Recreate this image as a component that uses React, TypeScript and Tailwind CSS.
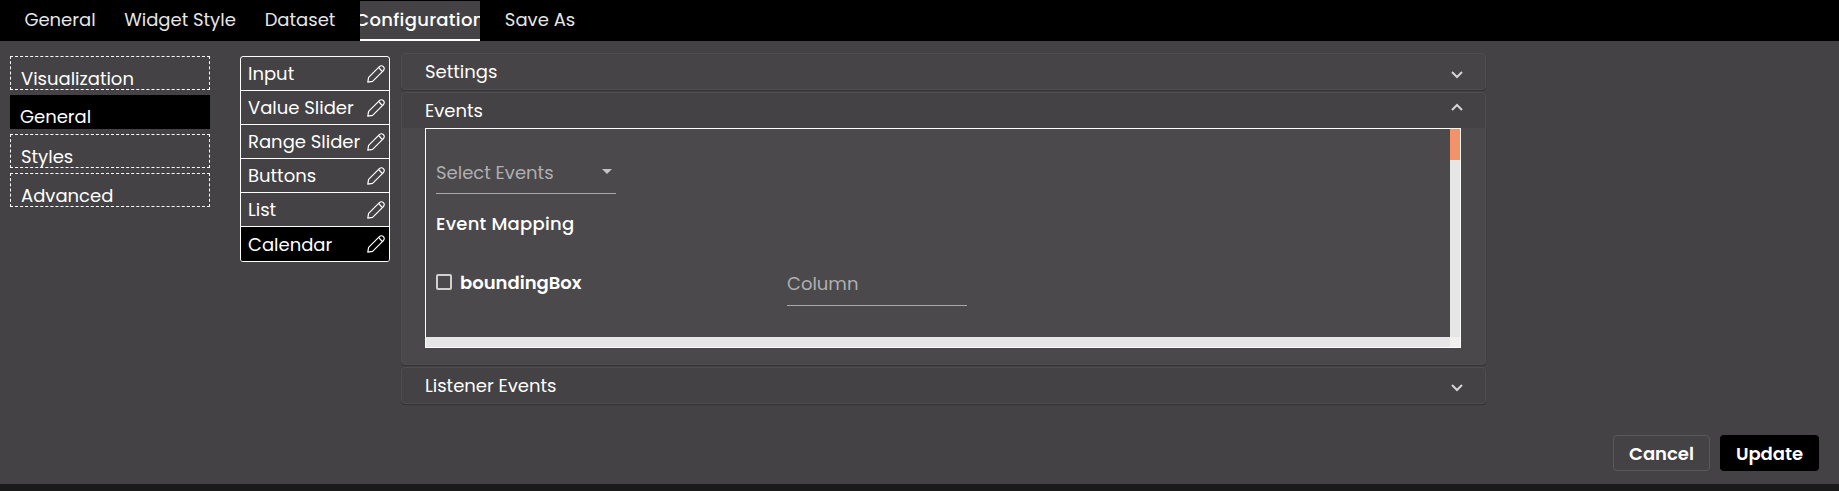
import React from "react";

function Pencil() {
  return (
    <svg width="18" height="18" viewBox="0 0 18 18" fill="none" stroke="#fff" strokeWidth="1.2" strokeLinejoin="round" strokeLinecap="round" className="shrink-0">
      <path d="M0.8 17.2 L1.6 12.4 L12.4 1.6 C13.5 0.5 15.3 0.5 16.4 1.6 C17.5 2.7 17.5 4.5 16.4 5.6 L5.6 16.4 Z" />
      <path d="M11.6 2.4 C12.6 3 13 4.6 15.6 6.4" />
    </svg>
  );
}

function Chevron({ up }: { up?: boolean }) {
  return (
    <svg width="12" height="8" viewBox="0 0 12 8" fill="none" stroke="#d4d4d4" strokeWidth="2" className="shrink-0">
      <path d={up ? "M1 7 L6 2 L11 7" : "M1 1 L6 6 L11 1"} />
    </svg>
  );
}

const tabs = [
  { label: "General", w: "w-[100px]" },
  { label: "Widget Style", w: "w-[140px]" },
  { label: "Dataset", w: "w-[100px]" },
];

const side = ["Visualization", "General", "Styles", "Advanced"];
const items = ["Input", "Value Slider", "Range Slider", "Buttons", "List", "Calendar"];

export default function App() {
  return (
    <div className="w-[1839px] h-[491px] overflow-hidden flex flex-col bg-[#444245] text-white font-['Poppins','Inter',sans-serif] text-[18px]">
      <div className="h-[41px] shrink-0 bg-black flex pl-[10px]">
        {tabs.map((t) => (
          <div key={t.label} className={`${t.w} h-[41px] pb-[2px] flex items-center justify-center text-[#e6e6e6]`}>
            {t.label}
          </div>
        ))}
        <div className="ml-[10px] w-[120px] mt-[1px] h-[40px] bg-[#444245] border-b-2 border-white overflow-hidden flex items-center justify-center whitespace-nowrap font-medium tracking-[0.3px] pb-[1px]">
          Configuration
        </div>
        <div className="ml-[10px] w-[100px] h-[41px] pb-[2px] flex items-center justify-center text-[#e6e6e6]">Save As</div>
      </div>

      <div className="flex-1 flex pl-[10px]">
        <div className="w-[200px] mt-[15px] flex flex-col gap-[5px]">
          {side.map((s) => (
            <div
              key={s}
              className={
                s === "General"
                  ? "h-[34px] bg-black pl-[10px] pt-[10px] leading-6"
                  : "h-[34px] border border-dashed border-white pl-[10px] pt-[10px] leading-6"
              }
            >
              {s}
            </div>
          ))}
        </div>

        <div className="w-[150px] ml-[30px] mt-[15px] h-[206px] border border-white rounded-[3px] overflow-hidden flex flex-col">
          {items.map((it, i) => (
            <div
              key={it}
              className={`h-[34px] flex items-center justify-between pl-[7px] pr-[4px] ${i < items.length - 1 ? "border-b border-white" : ""} ${it === "Calendar" ? "bg-black" : ""}`}
            >
              <span className="whitespace-nowrap">{it}</span>
              <Pencil />
            </div>
          ))}
        </div>

        <div className="w-[1085px] ml-[11px] mt-[12px] flex flex-col gap-[2px]">
          <div className="h-[37px] rounded-[4px] border border-[#4f4d50] bg-[#464447] shadow-[0_1px_1px_rgba(0,0,0,0.25)] pl-[23px] pr-[22px] flex items-center justify-between">
            <span>Settings</span>
            <span className="mt-[6px]"><Chevron /></span>
          </div>

          <div className="h-[273px] rounded-[4px] border border-[#4f4d50] bg-[#4a484b] shadow-[0_1px_1px_rgba(0,0,0,0.25)] flex flex-col">
            <div className="h-[35px] shrink-0 bg-[#444245] rounded-t-[4px] pl-[23px] pr-[22px] flex items-center justify-between">
              <span>Events</span>
              <span className="-mt-[7px]"><Chevron up /></span>
            </div>
            <div className="ml-[23px] w-[1036px] h-[220px] border border-white bg-[#4b494c] flex flex-col">
              <div className="flex-1 flex min-h-0">
                <div className="flex-1 pl-[10px] flex flex-col">
                  <div className="mt-[22px] w-[180px] h-[43px] border-b border-[#a9a8aa] flex items-center justify-between pr-[4px] text-[#b0afb1]">
                    <span>Select Events</span>
                    <span className="w-0 h-0 border-x-[5px] border-x-transparent border-t-[5px] border-t-[#c4c4c4] mb-[2px]" />
                  </div>
                  <div className="mt-[18px] leading-6 font-medium tracking-[0.25px]">Event Mapping</div>
                  <div className="mt-[35px] flex">
                    <div className="w-[351px] flex items-center gap-[8px] h-[24px] -mt-[1px]">
                      <span className="w-[16px] h-[16px] border-2 border-[#d0d0d0] rounded-[2px]" />
                      <span className="font-semibold">boundingBox</span>
                    </div>
                    <div className="w-[180px] h-[35px] border-b border-[#a9a8aa] text-[#b0afb1] leading-6 pt-[1px]">Column</div>
                  </div>
                </div>
                <div className="w-[10px] bg-[#e6e6e6]">
                  <div className="h-[31px] bg-[#f39169]" />
                </div>
              </div>
              <div className="h-[10px] shrink-0 flex">
                <div className="flex-1 bg-[#e6e6e6]" />
                <div className="w-[10px] bg-[#f1f0ee]" />
              </div>
            </div>
          </div>

          <div className="h-[37px] rounded-[4px] border border-[#4f4d50] bg-[#444245] shadow-[0_1px_1px_rgba(0,0,0,0.25)] pl-[23px] pr-[22px] flex items-center justify-between">
            <span>Listener Events</span>
            <span className="mt-[5px]"><Chevron /></span>
          </div>
        </div>
      </div>

      <div className="flex justify-end gap-[10px] pr-[20px] mb-[13px]">
        <button className="w-[97px] h-[36px] rounded-[4px] border border-[#5a585b] font-semibold">Cancel</button>
        <button className="w-[99px] h-[36px] rounded-[4px] bg-black font-semibold">Update</button>
      </div>
      <div className="h-[7px] shrink-0 bg-[#1a1a1a]" />
    </div>
  );
}
